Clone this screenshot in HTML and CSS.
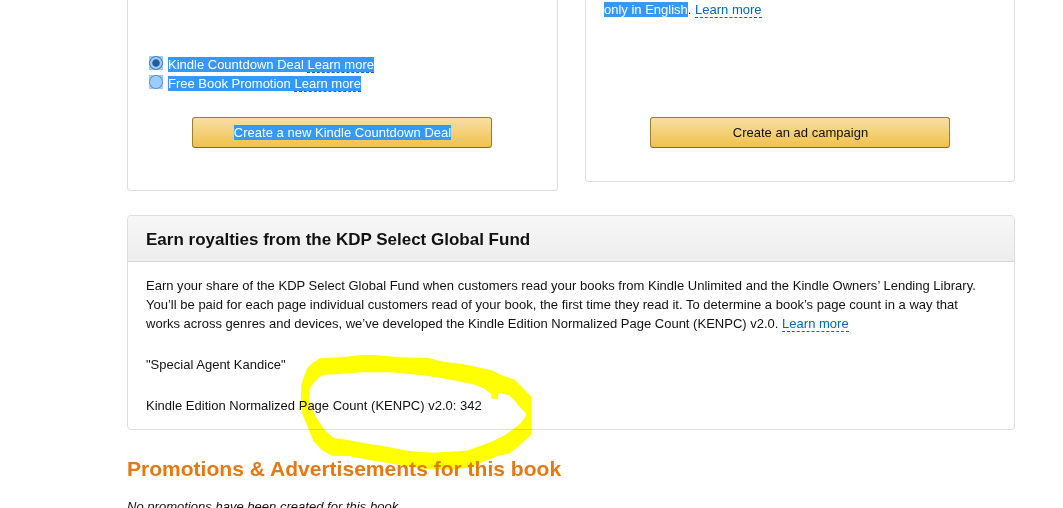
FILE: index.html
```html
<!DOCTYPE html>
<html lang="en">
<head>
  <meta charset="UTF-8">
  <title>KDP Select</title>
  <link rel="stylesheet" href="styles.css">
</head>
<body>
  <div class="container">
    <div class="panels">
      <div class="panel countdown">
        <form class="options">
          <label><span class="radio checked"></span><span class="hl">Kindle Countdown Deal <a href="#">Learn more</a></span></label>
          <label><span class="radio"></span><span class="hl">Free Book Promotion <a href="#">Learn more</a></span></label>
        </form>
        <button type="button"><span class="hl">Create a new Kindle Countdown Deal</span></button>
      </div>

      <div class="panel ads">
        <p><span class="hl">only in English</span>. <a href="#">Learn more</a></p>
        <button type="button">Create an ad campaign</button>
      </div>
    </div>

    <div class="fund">
      <h3>Earn royalties from the KDP Select Global Fund</h3>
      <div class="fund-body">
        <p>
          Earn your share of the KDP Select Global Fund when customers read your books from Kindle Unlimited and the Kindle Owners’ Lending Library.<br>
          You’ll be paid for each page individual customers read of your book, the first time they read it. To determine a book’s page count in a way that<br>
          works across genres and devices, we’ve developed the Kindle Edition Normalized Page Count (KENPC) v2.0. <a href="#">Learn more</a>
        </p>
        <p>"Special Agent Kandice"</p>
        <p>Kindle Edition Normalized Page Count (KENPC) v2.0: 342</p>
      </div>
    </div>

    <h2>Promotions &amp; Advertisements for this book</h2>
    <p class="empty">No promotions have been created for this book.</p>
  </div>

  <svg class="marker" viewBox="0 0 780 390">
    <path fill-rule="evenodd" d="M92 40 L150 37 L215 30 L255 30 L330 37 L415 39 L460 50 L520 58 L605 76 L640 93 L672 103 L690 120 L725 156 L725 268 L690 300 L660 325 L625 333 L580 350 L535 368 L480 374 L400 371 L330 360 L250 347 L175 333 L125 332 L95 315 L70 287 L55 250 L38 210 L33 175 L34 120 L42 95 L52 70 L70 52 Z
      M105 89 L160 86 L210 82 L300 82 L390 90 L450 98 L500 108 L555 119 L580 130 L604 147 L604 161 L624 161 L624 143 L658 151 L672 165 L690 187 L708 205 L706 217 L690 236 L670 252 L645 270 L610 288 L570 303 L530 317 L430 323 L360 319 L290 305 L220 294 L170 284 L131 279 L103 254 L80 220 L65 190 L56 160 L60 130 L75 109 L88 97 Z"/>
  </svg>
</body>
</html>
```

FILE: styles.css
```css
body {
  margin: 0;
  height: 508px;
  overflow: hidden;
  background: #fff;
  color: #111;
  font: 13px/19px "Liberation Sans", Arial, sans-serif;
}

.container {
  width: 888px;
  margin-left: 127px;
  white-space: nowrap;
}

p {
  margin: 0;
}

a {
  color: #0066c0;
  text-decoration: none;
  border-bottom: 1px dashed #0066c0;
}

.hl {
  background: #3399ff;
  color: #fff;
}

.hl a {
  color: #fff;
}

.panels {
  display: flex;
  justify-content: space-between;
  align-items: flex-start;
  height: 215px;
}

.panel {
  box-sizing: border-box;
  border: 1px solid #ddd;
  border-top: none;
  border-radius: 0 0 4px 4px;
}

.countdown {
  width: 431px;
  height: 191px;
  padding-top: 55px;
}

.ads {
  width: 430px;
  height: 182px;
}

.ads p {
  padding-left: 18px;
}

.options {
  margin-left: 21px;
}

.options label {
  display: flex;
  height: 19px;
}

.radio {
  box-sizing: border-box;
  width: 14px;
  height: 14px;
  margin: 1px 5px 0 0;
  background: radial-gradient(circle, #99ccff 5.6px, #6596c8 6.3px, #6596c8 6.6px, #99ccff 7.3px);
}

.radio.checked {
  background: radial-gradient(circle, #1f5c99 3.2px, #99ccff 4.2px, #99ccff 5.5px, #5485b6 6.2px, #5485b6 6.6px, #99ccff 7.3px);
}

.options .hl {
  height: 15px;
  margin-top: 2px;
  line-height: 15px;
}

button {
  display: block;
  width: 300px;
  height: 31px;
  margin: 24px 0 0 64px;
  padding: 0 0 0 1px;
  border: 1px solid #9c7e31;
  border-bottom-color: #846a29;
  border-radius: 3px;
  background: linear-gradient(#f7dfa5, #f0c14b);
  color: #111;
  font: inherit;
  letter-spacing: 0.02px;
}

.ads button {
  margin-top: 98px;
}

.fund {
  box-sizing: border-box;
  height: 215px;
  border: 1px solid #ddd;
  border-radius: 4px;
}

.fund h3 {
  height: 45px;
  margin: 0;
  padding-left: 18px;
  border-bottom: 1px solid #d5d5d5;
  border-radius: 3px 3px 0 0;
  background: linear-gradient(#f7f7f7, #ededed);
  font-size: 17px;
  line-height: 47px;
}

.fund-body {
  padding: 14px 18px;
  letter-spacing: 0.009px;
}

.fund-body p {
  margin-bottom: 22px;
}

h2 {
  margin: 24px 0 0;
  color: #e47911;
  font-size: 21px;
  line-height: 30px;
  letter-spacing: 0.02px;
}

.empty {
  margin-top: 13px;
  font-style: italic;
  letter-spacing: 0.02px;
}

/* highlighter stroke drawn over the page count */
.marker {
  position: absolute;
  left: 290px;
  top: 345px;
  width: 260px;
  height: 130px;
  fill: #ff0;
  mix-blend-mode: multiply;
  pointer-events: none;
}
```
